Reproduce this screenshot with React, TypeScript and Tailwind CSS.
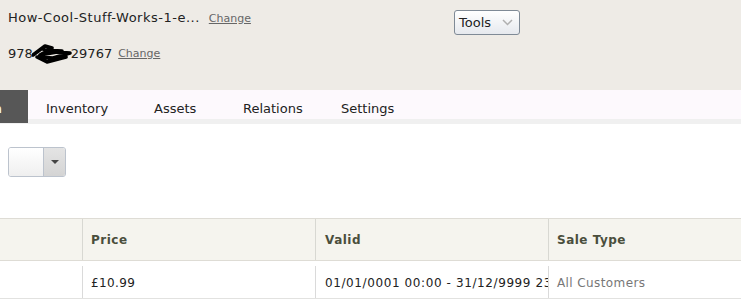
import React from 'react';

function Scribble() {
  return (
    <svg width="40" height="22" viewBox="0 0 40 22" className="inline-block align-middle -mx-[1px]">
      <path
        d="M1 12 L13 3 L20 5 L8 12 L25 9 L38 10 L21 15 L5 14 L15 19 L34 14 M12 7 L30 8"
        fill="none"
        stroke="#000"
        strokeWidth="3.6"
        strokeLinecap="round"
        strokeLinejoin="round"
      />
    </svg>
  );
}

export default function App() {
  const font = "font-['DejaVu_Sans',sans-serif]";
  return (
    <div className={`w-[741px] h-[305px] overflow-hidden bg-white ${font}`}>
      {/* top header */}
      <div className="h-[90px] bg-[#eeebe6] flex">
        <div className="w-[454px] pl-[8px] pt-[10px]">
          <div className="flex items-baseline h-[16px] leading-[16px]">
            <span className="text-[13px] text-[#222] tracking-[0.5px]">How-Cool-Stuff-Works-1-e...</span>
            <a className="ml-[9px] text-[11px] text-[#666] underline">Change</a>
          </div>
          <div className="flex items-center h-[16px] leading-[16px] mt-[20px]">
            <span className="text-[13px] text-[#222]">978</span>
            <Scribble />
            <span className="text-[13px] text-[#222]">29767</span>
            <a className="ml-[6px] text-[11px] text-[#666] underline">Change</a>
          </div>
        </div>
        <div className="pt-[10px]">
          <button className="w-[66px] h-[25px] rounded-[3px] border border-[#7f8a96] bg-gradient-to-b from-white to-[#e6e9ee] flex items-center pl-[4px] text-[13px] text-[#222]">
            Tools
            <svg width="11" height="7" viewBox="0 0 11 7" className="ml-[11px]">
              <path d="M1 1 L5.5 5.5 L10 1" fill="none" stroke="#b0b0b0" strokeWidth="1.5" />
            </svg>
          </button>
        </div>
      </div>

      {/* tab bar */}
      <div className="flex h-[34px] bg-[#f0f0f0]">
        <div className="w-[28px] h-[33px] bg-[#575757] overflow-hidden flex justify-end pr-[26px] pt-[11px] text-[13px] leading-[16px] text-white whitespace-nowrap">
          Main
        </div>
        <div className="flex-1 h-[29px] bg-[#fdf9fd] flex text-[13px] leading-[16px] text-[#222] pt-[11px]">
          <span className="w-[108px] pl-[18px]">Inventory</span>
          <span className="w-[89px] pl-[18px]">Assets</span>
          <span className="w-[98px] pl-[18px]">Relations</span>
          <span className="pl-[18px]">Settings</span>
        </div>
      </div>

      {/* split button */}
      <div className="pl-[8px] pt-[23px]">
        <div className="w-[58px] h-[30px] rounded-[3px] border border-[#bcc3cd] flex overflow-hidden">
          <div className="w-[35px] bg-gradient-to-b from-white to-[#efefef] border-r border-[#bcc3cd]"></div>
          <div className="flex-1 bg-gradient-to-b from-[#e4e4e4] to-[#d4d4d4] flex items-center justify-center">
            <svg width="8" height="4" viewBox="0 0 8 4">
              <path d="M0 0 L8 0 L4 4 Z" fill="#444" />
            </svg>
          </div>
        </div>
      </div>

      {/* table */}
      <div className="mt-[41px]">
        <div className="flex h-[43px] bg-[#f5f4ee] border-t border-b border-[#dedcd5] text-[12px] font-bold text-[#4a4e3c] tracking-[0.5px]">
          <div className="w-[82px]"></div>
          <div className="w-[233px] border-l border-[#d8d8d2] pl-[8px] flex items-center">Price</div>
          <div className="w-[233px] border-l border-[#d8d8d2] pl-[9px] flex items-center">Valid</div>
          <div className="flex-1 border-l border-[#d8d8d2] pl-[8px] flex items-center">Sale Type</div>
        </div>
        <div className="flex h-[38px] items-end border-b border-[#e2e2e0] text-[12px] tracking-[0.4px]">
          <div className="w-[82px] h-[32px]"></div>
          <div className="w-[233px] h-[32px] border-l border-[#dadada] pl-[8px] pt-[1px] flex items-center text-[#222]">£10.99</div>
          <div className="w-[233px] h-[32px] border-l border-[#dadada] pl-[9px] pt-[1px] flex items-center text-[#222] overflow-hidden whitespace-nowrap tracking-[0.6px]">
            01/01/0001 00:00 - 31/12/9999 23:59
          </div>
          <div className="flex-1 h-[32px] border-l border-[#dadada] pl-[8px] pt-[1px] flex items-center text-[#777]">All Customers</div>
        </div>
      </div>
    </div>
  );
}
